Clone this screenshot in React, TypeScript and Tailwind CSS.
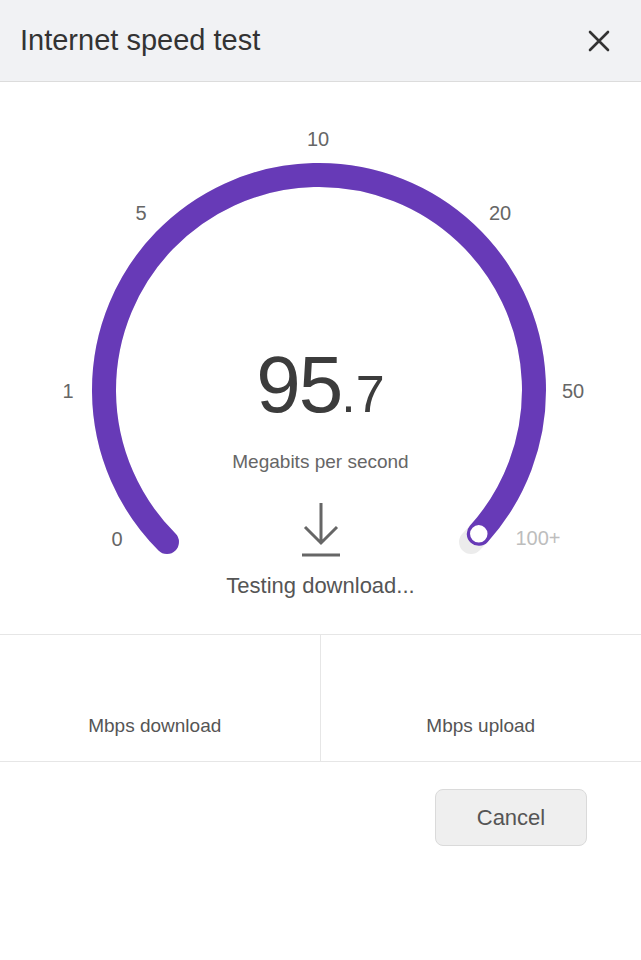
import React from "react";

// gauge geometry, in the svg's own pixels
const CX = 319;
const CY = 308;
const R = 215;

function pt(deg: number) {
	const a = (deg * Math.PI) / 180;
	return { x: CX + R * Math.sin(a), y: CY - R * Math.cos(a) };
}

function arc(from: number, to: number) {
	const a = pt(from);
	const b = pt(to);
	const large = to - from > 180 ? 1 : 0;
	return `M ${a.x} ${a.y} A ${R} ${R} 0 ${large} 1 ${b.x} ${b.y}`;
}

const labels = [
	{ t: "0", x: 117, y: 457 },
	{ t: "1", x: 68, y: 309 },
	{ t: "5", x: 141, y: 131 },
	{ t: "10", x: 318, y: 57 },
	{ t: "20", x: 500, y: 131 },
	{ t: "50", x: 573, y: 309 },
];

function Gauge() {
	const knob = pt(132);
	return (
		<svg className="absolute inset-0" width="641" height="552" viewBox="0 0 641 552">
			<path d={arc(-135, 135)} fill="none" stroke="#ececec" strokeWidth="24" strokeLinecap="round" />
			<path d={arc(-135, 132)} fill="none" stroke="#673ab7" strokeWidth="24" strokeLinecap="round" />
			<circle cx={knob.x} cy={knob.y} r="10" fill="#fff" stroke="#673ab7" strokeWidth="2.5" />
			{labels.map((l) => (
				<text
					key={l.t}
					x={l.x}
					y={l.y}
					textAnchor="middle"
					dominantBaseline="central"
					fontSize="20"
					fill="#666"
					fontFamily="Liberation Sans, Arial, sans-serif"
				>
					{l.t}
				</text>
			))}
			<text
				x="538"
				y="456"
				textAnchor="middle"
				dominantBaseline="central"
				fontSize="20"
				fill="#bdbdbd"
				fontFamily="Liberation Sans, Arial, sans-serif"
			>
				100+
			</text>
		</svg>
	);
}

export default function App() {
	return (
		<div className="min-h-screen w-full bg-white font-['Liberation_Sans',Arial,sans-serif]">
			{/* header */}
			<div className="flex h-[82px] items-center justify-between border-b border-[#dcdcdc] bg-[#f1f2f4] pl-5 pr-[31px]">
				<h1 className="text-[29px] text-[#333]">Internet speed test</h1>
				<svg width="22" height="22" viewBox="0 0 22 22">
					<path d="M2 2 L20 20 M20 2 L2 20" stroke="#333" strokeWidth="2.6" strokeLinecap="round" />
				</svg>
			</div>

			{/* gauge */}
			<div className="relative h-[552px]">
				<Gauge />
				<div className="relative flex flex-col items-center pt-[263px]">
					<div className="flex items-baseline leading-none text-[#3c3c3c]">
						<span className="text-[80px] tracking-tight">95</span>
						<span className="text-[52px]">.7</span>
					</div>
					<p className="mt-[27px] text-[19px] leading-none text-[#666]">Megabits per second</p>
					<svg className="mt-[32px]" width="40" height="54" viewBox="0 0 40 54">
						<path d="M20 0 V40 M4 24 L20 40 L36 24" fill="none" stroke="#666" strokeWidth="3" />
						<path d="M1 52 H39" stroke="#666" strokeWidth="3" />
					</svg>
					<p className="mt-[18px] text-[22px] leading-none text-[#555]">Testing download...</p>
				</div>
			</div>

			{/* results */}
			<div className="grid h-[128px] grid-cols-2 border-y border-[#e6e6e6]">
				<div className="flex items-end justify-center border-r border-[#e6e6e6] pb-[26px] pr-[10px]">
					<span className="text-[19px] leading-none text-[#555]">Mbps download</span>
				</div>
				<div className="flex items-end justify-center pb-[26px]">
					<span className="text-[19px] leading-none text-[#555]">Mbps upload</span>
				</div>
			</div>

			<div className="flex justify-end pr-[54px] pt-[27px]">
				<button className="h-[57px] w-[152px] rounded-lg border border-[#dadada] bg-[#efefef] text-[22px] text-[#555]">
					Cancel
				</button>
			</div>
		</div>
	);
}
